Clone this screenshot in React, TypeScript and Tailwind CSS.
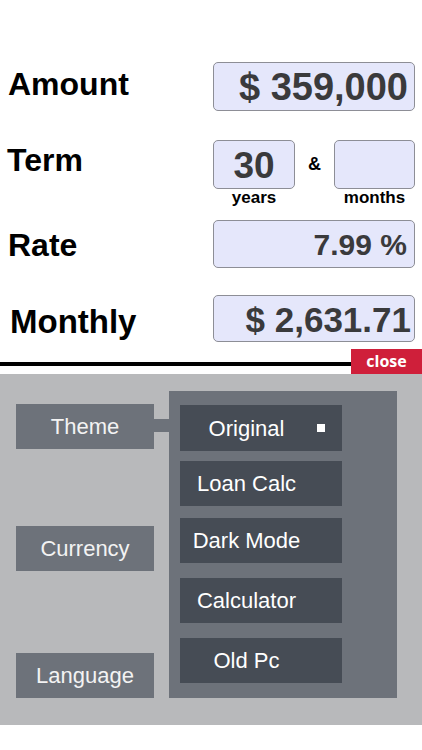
import React from "react";

const font = { fontFamily: '"Liberation Sans", Arial, Helvetica, sans-serif' };

function Box({ className, children }: { className: string; children?: React.ReactNode }) {
  return (
    <div className={`border border-[#8d8e96] bg-[#e5e7fb] rounded-[5px] text-[#3a3a3c] font-bold leading-none ${className}`}>
      {children}
    </div>
  );
}

export default function App() {
  const options = [
    { label: "Original", mt: "mt-0", h: "h-[46px]", sel: true },
    { label: "Loan Calc", mt: "mt-[10px]", h: "h-[45px]", sel: false },
    { label: "Dark Mode", mt: "mt-[12px]", h: "h-[45px]", sel: false },
    { label: "Calculator", mt: "mt-[15px]", h: "h-[45px]", sel: false },
    { label: "Old Pc", mt: "mt-[15px]", h: "h-[45px]", sel: false },
  ];
  return (
    <div style={font} className="w-[422px] h-[750px] bg-white overflow-hidden flex flex-col">
      {/* Top form */}
      <div className="pt-[62px] flex flex-col">
        {/* Amount */}
        <div className="flex items-start">
          <div className="w-[213px] pl-[8px] mt-[6px] text-[32px] leading-[32px] font-bold text-black">Amount</div>
          <Box className="w-[202px] h-[49px] flex justify-end pt-[5px] pr-[6px] text-[38px]">$ 359,000</Box>
        </div>
        {/* Term */}
        <div className="flex items-start mt-[29px]">
          <div className="w-[213px] pl-[7px] mt-[4px] text-[32px] leading-[32px] font-bold text-black">Term</div>
          <div className="flex flex-col items-center w-[82px]">
            <Box className="w-[82px] h-[49px] flex justify-center pt-[6px] text-[37px]">30</Box>
            <div className="text-[17px] leading-none font-bold text-black">years</div>
          </div>
          <div className="w-[39px] h-[49px] flex items-center justify-center text-[18px] font-bold text-black">&amp;</div>
          <div className="flex flex-col items-center w-[81px]">
            <Box className="w-[81px] h-[49px]" />
            <div className="text-[17px] leading-none font-bold text-black">months</div>
          </div>
        </div>
        {/* Rate */}
        <div className="flex items-start mt-[14px]">
          <div className="w-[213px] pl-[8px] mt-[9px] text-[32px] leading-[32px] font-bold text-black">Rate</div>
          <Box className="w-[202px] h-[48px] flex justify-end pt-[9px] pr-[7px] text-[30px]">7.99 %</Box>
        </div>
        {/* Monthly */}
        <div className="flex items-start mt-[27px]">
          <div className="w-[213px] pl-[10px] mt-[10px] text-[33px] leading-[33px] font-bold text-black">Monthly</div>
          <Box className="w-[202px] h-[47px] flex justify-end pt-[6px] pr-[3px] text-[35px]">$ 2,631.71</Box>
        </div>
        {/* Divider + close */}
        <div className="flex items-start mt-[7px] h-[25px]">
          <div className="flex-1 h-[4px] bg-black mt-[13px]" />
          <button
            style={{ fontFamily: '"Open Sans", "Liberation Sans", sans-serif' }}
            className="w-[71px] h-[25px] bg-[#cf1f3a] text-white font-bold text-[16px] leading-none flex items-center justify-center pb-[2px]"
          >
            close
          </button>
        </div>
      </div>

      {/* Settings panel */}
      <div className="h-[351px] bg-[#b8b9bb] flex items-start pl-[16px] pt-[17px]">
        {/* Left column */}
        <div className="w-[138px] flex flex-col pt-[13px]">
          <div className="h-[45px] bg-[#6d727a] text-[#f3f3f3] text-[22px] flex items-center justify-center">Theme</div>
          <div className="h-[45px] mt-[77px] bg-[#6d727a] text-[#f3f3f3] text-[22px] flex items-center justify-center">Currency</div>
          <div className="h-[45px] mt-[82px] bg-[#6d727a] text-[#f3f3f3] text-[22px] flex items-center justify-center">Language</div>
        </div>
        {/* Connector */}
        <div className="w-[15px] h-[13px] mt-[28px] bg-[#6d727a]" />
        {/* Inner panel */}
        <div className="w-[228px] h-[307px] bg-[#6d727a] pl-[11px] pt-[14px] flex flex-col">
          {options.map((o) => (
            <div key={o.label} className={`w-[162px] ${o.h} ${o.mt} bg-[#464c55] flex items-center`}>
              <span className="w-[133px] text-center text-white text-[22px]">{o.label}</span>
              {o.sel && <span className="ml-[4px] w-[8px] h-[8px] bg-white" />}
            </div>
          ))}
        </div>
      </div>
      <div className="flex-1 bg-white" />
    </div>
  );
}
